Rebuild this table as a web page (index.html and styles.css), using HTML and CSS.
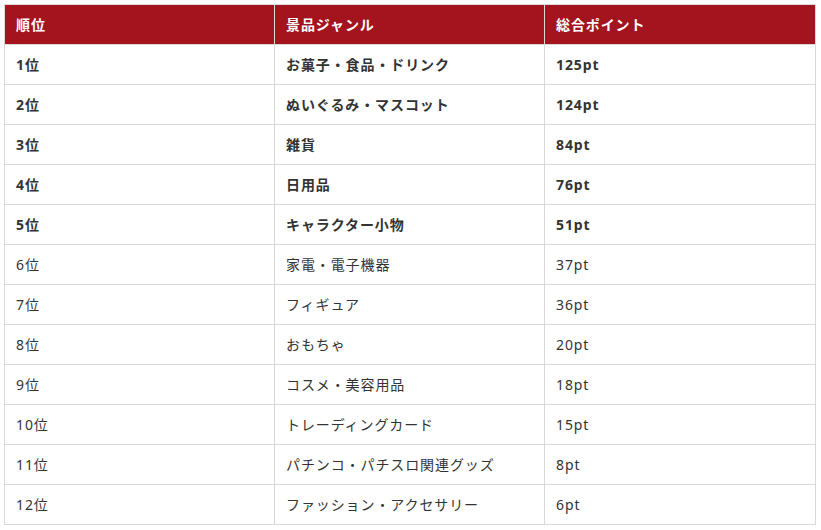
FILE: index.html
```html
<!DOCTYPE html>
<html lang="ja">
<head>
<meta charset="utf-8">
<link rel="stylesheet" href="styles.css">
</head>
<body>
<table class="rank">
  <thead>
    <tr><th>順位</th><th>景品ジャンル</th><th>総合ポイント</th></tr>
  </thead>
  <tbody>
    <tr class="top"><td>1位</td><td>お菓子・食品・ドリンク</td><td>125pt</td></tr>
    <tr class="top"><td>2位</td><td>ぬいぐるみ・マスコット</td><td>124pt</td></tr>
    <tr class="top"><td>3位</td><td>雑貨</td><td>84pt</td></tr>
    <tr class="top"><td>4位</td><td>日用品</td><td>76pt</td></tr>
    <tr class="top"><td>5位</td><td>キャラクター小物</td><td>51pt</td></tr>
    <tr><td>6位</td><td>家電・電子機器</td><td>37pt</td></tr>
    <tr><td>7位</td><td>フィギュア</td><td>36pt</td></tr>
    <tr><td>8位</td><td>おもちゃ</td><td>20pt</td></tr>
    <tr><td>9位</td><td>コスメ・美容用品</td><td>18pt</td></tr>
    <tr><td>10位</td><td>トレーディングカード</td><td>15pt</td></tr>
    <tr><td>11位</td><td>パチンコ・パチスロ関連グッズ</td><td>8pt</td></tr>
    <tr><td>12位</td><td>ファッション・アクセサリー</td><td>6pt</td></tr>
  </tbody>
</table>
</body>
</html>
```

FILE: styles.css
```css
html, body {
  margin: 0;
  padding: 0;
  background: #fff;
}
body {
  padding: 4px 0 0 4px;
  font-family: "Noto Sans", "Noto Sans CJK JP", sans-serif;
  font-size: 14px;
  color: #333;
}
.rank {
  border-collapse: collapse;
  width: 812px;
  table-layout: fixed;
  border: 1px solid #ddd;
}
.rank th,
.rank td {
  height: 40px;
  padding: 0 0 0 11px;
  text-align: left;
  vertical-align: middle;
  letter-spacing: 0.9px;
  line-height: 1;
  box-sizing: border-box;
  border: 1px solid #d9d9d9;
}
.rank th {
  background: #a3141f;
  color: #fff;
  font-weight: 700;
  border-color: #d9d9d9;
  border-top: none;
}
.rank tr.top td {
  font-weight: 700;
}
.rank th:nth-child(1), .rank td:nth-child(1) { width: 270px; }
.rank th:nth-child(2), .rank td:nth-child(2) { width: 270px; }
```
